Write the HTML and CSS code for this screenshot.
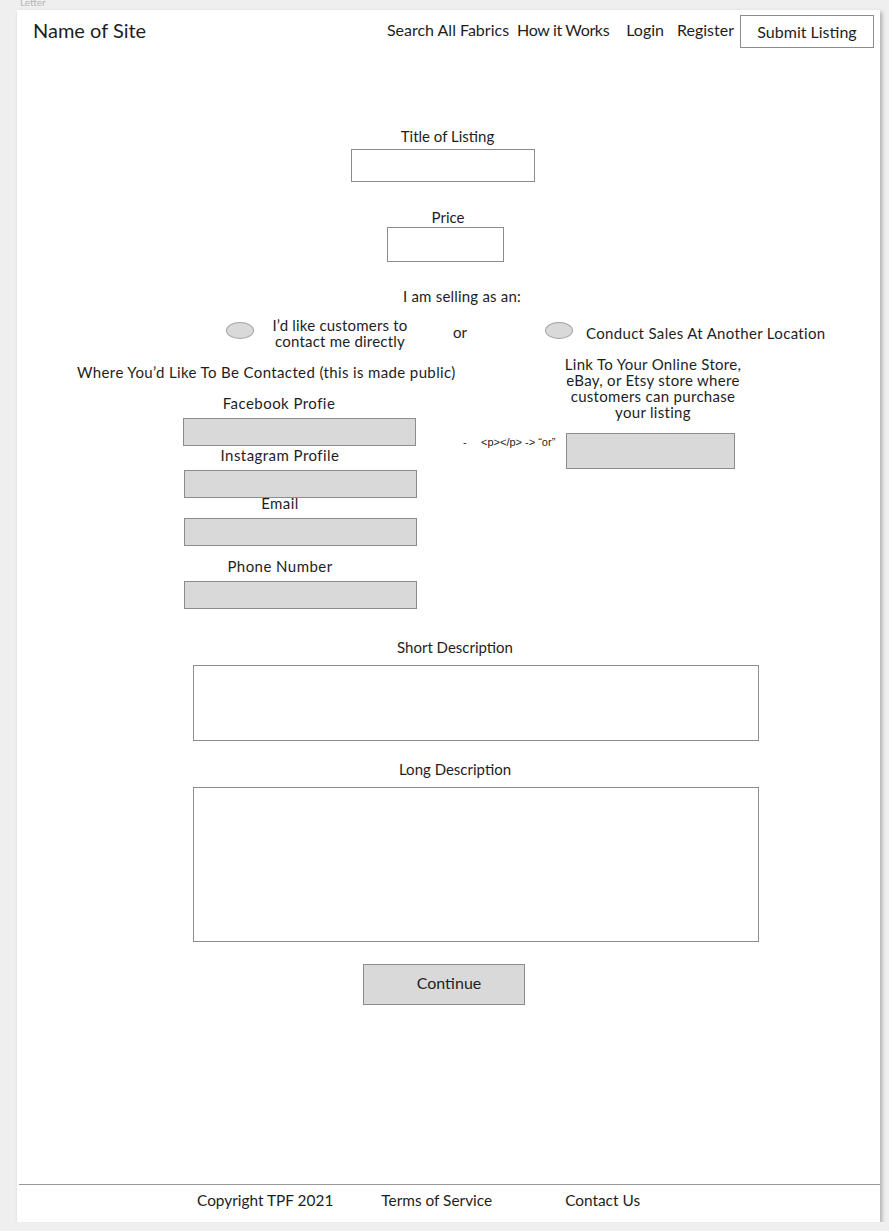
FILE: index.html
```html
<!DOCTYPE html>
<html>
<head>
    <title>Submit Listing</title>
    <link rel="stylesheet" href="styles.css">
</head>
<body>
    <div class="doc-label">Letter</div>
    <div class="sheet">
        <header class="topbar">
            <div class="site-name">Name of Site</div>
            <nav class="nav">
                <a class="nav-search">Search All Fabrics</a>
                <a class="nav-how">How it Works</a>
                <a class="nav-login">Login</a>
                <a class="nav-register">Register</a>
                <button class="nav-submit">Submit Listing</button>
            </nav>
        </header>

        <main class="form">
            <div class="field field-title">
                <label for="title">Title of Listing</label>
                <input type="text" id="title">
            </div>

            <div class="field field-price">
                <label for="price">Price</label>
                <input type="text" id="price">
            </div>

            <p class="selling-as">I am selling as an:</p>

            <div class="choice-row">
                <span class="radio radio-one"></span>
                <span class="choice-text choice-direct">I’d like customers to<br>contact me directly</span>
                <span class="choice-or">or</span>
                <span class="radio radio-two"></span>
                <span class="choice-text choice-other">Conduct Sales At Another Location</span>
            </div>

            <div class="contact">
                <div class="contact-left">
                    <p class="contact-heading">Where You’d Like To Be Contacted (this is made public)</p>

                    <div class="contact-field contact-facebook">
                        <label>Facebook Profie</label>
                        <input type="text" class="grey-input">
                    </div>
                    <div class="contact-field contact-instagram">
                        <label>Instagram Profile</label>
                        <input type="text" class="grey-input">
                    </div>
                    <div class="contact-field contact-email">
                        <label>Email</label>
                        <input type="text" class="grey-input">
                    </div>
                    <div class="contact-field contact-phone">
                        <label>Phone Number</label>
                        <input type="text" class="grey-input">
                    </div>
                </div>

                <div class="contact-right">
                    <p class="store-text">Link To Your Online Store,<br>eBay, or Etsy store where<br>customers can purchase<br>your listing</p>
                    <div class="store-row">
                        <span class="dev-note"><span class="dev-dash">-</span>&lt;p&gt;&lt;/p&gt; -&gt; “or”</span>
                        <input type="text" class="grey-input store-input">
                    </div>
                </div>
            </div>

            <div class="field field-short">
                <label for="short">Short Description</label>
                <textarea id="short"></textarea>
            </div>

            <div class="field field-long">
                <label for="long">Long Description</label>
                <textarea id="long"></textarea>
            </div>

            <button class="continue">Continue</button>
        </main>

        <footer class="footer">
            <span class="foot-copy">Copyright TPF 2021</span>
            <span class="foot-terms">Terms of Service</span>
            <span class="foot-contact">Contact Us</span>
        </footer>
    </div>
</body>
</html>
```

FILE: styles.css
```css
body {
    margin: 0;
    background-color: #efefef;
    font-family: Lato, "Noto Sans", sans-serif;
    color: #1e1e1e;
}

.doc-label {
    height: 10px;
    overflow: hidden;
    padding-left: 20px;
    font-size: 10px;
    line-height: 4px;
    color: #b5b5b5;
}

.sheet {
    margin-left: 17px;
    width: 863px;
    height: 1212px;
    background-color: #fff;
    box-shadow: 2px 2px 4px rgba(0, 0, 0, 0.28);
    display: flex;
    flex-direction: column;
}

/* top bar */
.topbar {
    display: flex;
    justify-content: space-between;
    align-items: center;
    padding: 5px 6px 0 16px;
}

.site-name {
    font-size: 20px;
    line-height: 22px;
    margin-top: -3px;
}

.nav {
    display: flex;
    align-items: center;
    font-size: 16px;
}

.nav a {
    margin-top: -5px;
}

.nav-search { margin-right: 8px; }
.nav-how { margin-right: 17px; letter-spacing: -0.35px; }
.nav-login { margin-right: 13px; }
.nav-register { margin-right: 6px; }

.nav-submit {
    width: 134px;
    height: 33px;
    border: 1px solid #8c8c8c;
    background-color: #fff;
    font-family: inherit;
    font-size: 16px;
    color: #1e1e1e;
    padding: 0;
}

/* form */
.form {
    font-size: 15px;
    line-height: 18px;
}

.field label {
    display: block;
    text-align: center;
}

input,
textarea {
    display: block;
    box-sizing: border-box;
    margin: 0;
    padding: 0;
    border: 1px solid #8c8c8c;
    background-color: #fff;
    font-family: inherit;
}

textarea {
    resize: none;
}

.grey-input {
    background-color: #d9d9d9;
}

.field-title {
    margin: 79px 0 0 334px;
    width: 184px;
}

.field-title label {
    padding-left: 9px;
    margin-bottom: 4px;
}

.field-title input {
    width: 184px;
    height: 33px;
}

.field-price {
    margin: 26px 0 0 370px;
    width: 117px;
}

.field-price label {
    padding-left: 5px;
    margin-bottom: 1px;
}

.field-price input {
    width: 117px;
    height: 35px;
}

.selling-as {
    margin: 25px 0 0 345px;
    width: 200px;
    text-align: center;
    letter-spacing: 0.2px;
}

/* radio choices */
.choice-row {
    display: flex;
    align-items: flex-start;
    margin-top: 12px;
    padding-left: 209px;
    line-height: 16px;
}

.radio {
    width: 28px;
    height: 17px;
    box-sizing: border-box;
    border: 1px solid #a3a3a3;
    border-radius: 50%;
    background-color: #d9d9d9;
    margin-top: 5px;
}

.choice-direct {
    width: 150px;
    margin-left: 11px;
    text-align: center;
    letter-spacing: 0.2px;
}

.choice-or {
    margin: 7px 0 0 38px;
}

.radio-two {
    margin-left: 78px;
}

.choice-other {
    margin: 8px 0 0 13px;
    letter-spacing: 0.33px;
}

/* contact section */
.contact {
    display: flex;
    margin-top: 9px;
}

.contact-left {
    margin-left: 60px;
    width: 380px;
    padding-top: 5px;
}

.contact-heading {
    margin: 0;
    white-space: nowrap;
    letter-spacing: 0.37px;
}

.contact-field {
    margin-left: 106px;
}

.contact-field label {
    display: block;
    width: 192px;
    text-align: center;
    margin-bottom: 6px;
    letter-spacing: 0.45px;
}

.contact-field input {
    width: 233px;
    height: 28px;
}

.contact-facebook { margin-top: 13px; }
.contact-instagram { margin-top: 0; margin-left: 107px; }
.contact-email { margin-top: -4px; margin-left: 107px; }
.contact-phone { margin-top: 11px; margin-left: 107px; }

.contact-right {
    margin-left: 6px;
}

.store-text {
    margin: -2px 0 0 86px;
    width: 208px;
    text-align: center;
    line-height: 16px;
    letter-spacing: 0.3px;
}

.store-row {
    display: flex;
    align-items: flex-start;
    margin-top: 13px;
}

.dev-note {
    font-family: "Liberation Sans", Arial, sans-serif;
    font-size: 11px;
    line-height: 12px;
    margin-top: 3px;
    width: 103px;
    white-space: nowrap;
}

.dev-dash {
    display: inline-block;
    width: 18px;
}

.store-input {
    width: 169px;
    height: 36px;
}

.field-short,
.field-long {
    margin-left: 176px;
    width: 566px;
}

.field-short {
    margin-top: 29px;
}

.field-long {
    margin-top: 19px;
}

.field-short label,
.field-long label {
    margin-bottom: 9px;
    padding-right: 42px;
}

.field-short textarea {
    width: 566px;
    height: 76px;
}

.field-long textarea {
    width: 566px;
    height: 155px;
}

.continue {
    display: block;
    margin: 22px 0 0 346px;
    width: 162px;
    height: 41px;
    padding: 0 0 4px 10px;
    border: 1px solid #8c8c8c;
    background-color: #d9d9d9;
    font-family: inherit;
    font-size: 16px;
    color: #1e1e1e;
}

/* footer */
.footer {
    margin-top: auto;
    margin-left: 2px;
    box-sizing: border-box;
    height: 38px;
    border-top: 1px solid #999;
    padding-top: 6px;
    font-size: 15.4px;
    line-height: 18px;
    display: flex;
}

.foot-copy { margin-left: 178px; }
.foot-terms { margin-left: 48px; }
.foot-contact { margin-left: 73px; }
```
